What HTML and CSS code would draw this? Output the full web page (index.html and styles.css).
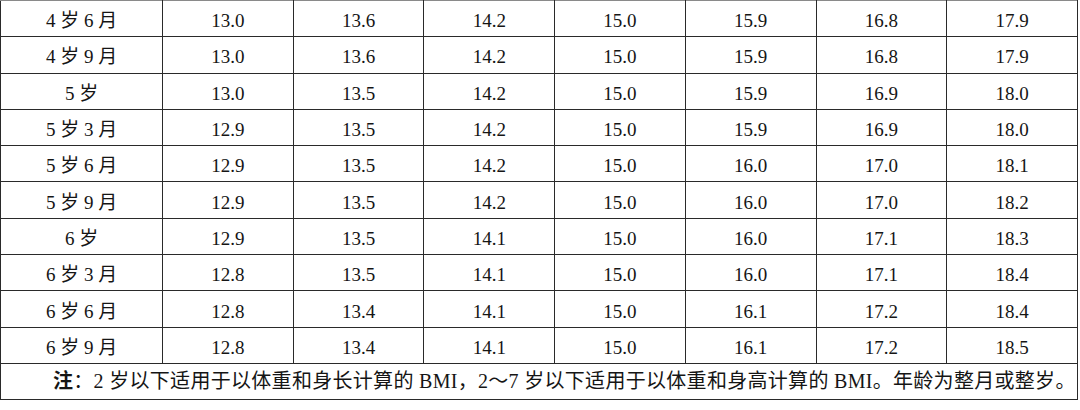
FILE: index.html
```html
<!DOCTYPE html>
<html lang="zh-CN">
<head>
<meta charset="utf-8">
<title>BMI</title>
<link rel="stylesheet" href="styles.css">
</head>
<body>
<table class="bmi">
  <colgroup>
    <col class="c-age">
    <col class="c-val"><col class="c-val"><col class="c-val"><col class="c-val"><col class="c-val"><col class="c-val"><col class="c-val">
  </colgroup>
  <tbody>
    <tr><td>4 岁 6 月</td><td>13.0</td><td>13.6</td><td>14.2</td><td>15.0</td><td>15.9</td><td>16.8</td><td>17.9</td></tr>
    <tr><td>4 岁 9 月</td><td>13.0</td><td>13.6</td><td>14.2</td><td>15.0</td><td>15.9</td><td>16.8</td><td>17.9</td></tr>
    <tr><td>5 岁</td><td>13.0</td><td>13.5</td><td>14.2</td><td>15.0</td><td>15.9</td><td>16.9</td><td>18.0</td></tr>
    <tr><td>5 岁 3 月</td><td>12.9</td><td>13.5</td><td>14.2</td><td>15.0</td><td>15.9</td><td>16.9</td><td>18.0</td></tr>
    <tr><td>5 岁 6 月</td><td>12.9</td><td>13.5</td><td>14.2</td><td>15.0</td><td>16.0</td><td>17.0</td><td>18.1</td></tr>
    <tr><td>5 岁 9 月</td><td>12.9</td><td>13.5</td><td>14.2</td><td>15.0</td><td>16.0</td><td>17.0</td><td>18.2</td></tr>
    <tr><td>6 岁</td><td>12.9</td><td>13.5</td><td>14.1</td><td>15.0</td><td>16.0</td><td>17.1</td><td>18.3</td></tr>
    <tr><td>6 岁 3 月</td><td>12.8</td><td>13.5</td><td>14.1</td><td>15.0</td><td>16.0</td><td>17.1</td><td>18.4</td></tr>
    <tr><td>6 岁 6 月</td><td>12.8</td><td>13.4</td><td>14.1</td><td>15.0</td><td>16.1</td><td>17.2</td><td>18.4</td></tr>
    <tr><td>6 岁 9 月</td><td>12.8</td><td>13.4</td><td>14.1</td><td>15.0</td><td>16.1</td><td>17.2</td><td>18.5</td></tr>
    <tr class="note-row"><td colspan="8" class="note"><b>注</b>：2 岁以下适用于以体重和身长计算的 BMI，2〜7 岁以下适用于以体重和身高计算的 BMI。年龄为整月或整岁。</td></tr>
  </tbody>
</table>
</body>
</html>
```

FILE: styles.css
```css
html, body {
  margin: 0;
  padding: 0;
  background: #fff;
}

.bmi {
  border-collapse: collapse;
  table-layout: fixed;
  width: 1078px;
  font-family: "Liberation Serif", "Noto Sans CJK SC", serif;
  font-size: 19px;
  color: #151515;
}

.c-age { width: 162px; }
.c-val { width: 130.7px; }

.bmi tr { height: 36.3px; }

.bmi td {
  border: 1px solid #2a2a2a;
  text-align: center;
  vertical-align: middle;
  padding: 5px 0 0 0;
  line-height: 22px;
  white-space: nowrap;
}

.bmi tr:first-child td { border-top-color: #8a8a8a; }

.bmi td.note {
  text-align: left;
  padding: 0 0 2px 52px;
  font-size: 20px;
  letter-spacing: 0.3px;
  font-weight: normal;
}

.note b { font-weight: bold; }
```
